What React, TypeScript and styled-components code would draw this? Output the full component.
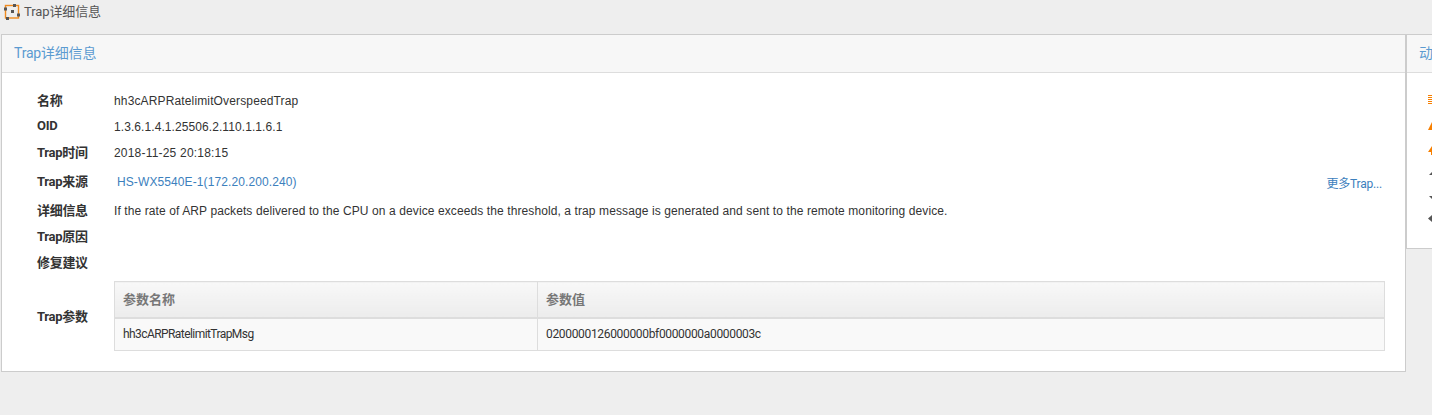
import React from 'react'
import styled, { createGlobalStyle } from 'styled-components'

const GlobalStyle = createGlobalStyle`
  html, body {
    margin: 0;
    padding: 0;
    background: #eeeeee;
  }
  body {
    width: 1432px;
    height: 415px;
    overflow: hidden;
    font-family: "Liberation Sans", "Noto Sans CJK SC", sans-serif;
    font-size: 12px;
    color: #333;
  }
`

const Page = styled.div`
  width: 1432px;
  height: 415px;
  overflow: hidden;
`

const TitleBar = styled.div`
  display: flex;
  align-items: center;
  gap: 3px;
  height: 23px;
  padding: 0 0 0 4px;
  margin-bottom: 11px;
  font-family: Roboto, "Noto Sans CJK SC", sans-serif;
  font-size: 13px;
  letter-spacing: -0.1px;
  color: #555;
`

const TitleText = styled.span`
  padding-bottom: 3px;
`

const Columns = styled.div`
  display: flex;
  align-items: flex-start;
`

const MainPanel = styled.section`
  flex: none;
  box-sizing: border-box;
  width: 1405px;
  margin-left: 1px;
  height: 338px;
  background: #fff;
  border: 1px solid #ccc;
`

const SidePanel = styled.aside`
  flex: none;
  box-sizing: border-box;
  width: 40px;
  height: 215px;
  background: #fff;
  border: 1px solid #ccc;
`

const PanelHeader = styled.h3`
  margin: 0;
  box-sizing: border-box;
  height: 38px;
  padding: 0 12px 4px;
  display: flex;
  align-items: center;
  white-space: nowrap;
  background: #f7f7f7;
  border-bottom: 1px solid #ddd;
  font-family: Roboto, "Noto Sans CJK SC", sans-serif;
  font-size: 14px;
  font-weight: 400;
  letter-spacing: -0.2px;
  color: #5b9bd1;
`

const Body = styled.div`
  padding: 15px 20px 0 35px;
`

const Row = styled.div<{ $height?: number }>`
  display: flex;
  align-items: center;
  height: ${p => p.$height ?? 26}px;
`

const Label = styled.div`
  flex: none;
  width: 77px;
  padding-bottom: 4px;
  font-family: Roboto, "Noto Sans CJK SC", sans-serif;
  font-size: 13px;
  font-weight: 700;
  letter-spacing: -0.3px;
  color: #333;
`

const ParamLabel = styled(Label)`
  padding-bottom: 2px;
`

const Value = styled.div<{ $spacing?: number }>`
  flex: 1;
  font-size: 12px;
  letter-spacing: ${p => p.$spacing ?? 0.1}px;
  color: #333;
`

const Link = styled.a`
  color: #3c80bd;
  font-size: 12px;
  text-decoration: none;
`

const SourceLink = styled(Link)`
  flex: 1;
  padding-left: 3px;
  letter-spacing: 0.1px;
`

const MoreLink = styled(Link)`
  margin-right: 3px;
  font-family: Roboto, "Noto Sans CJK SC", sans-serif;
  letter-spacing: -0.2px;
`

const ParamRow = styled(Row)`
  margin-top: 5px;
  height: 70px;
`

const Table = styled.table`
  flex: 1;
  border-collapse: collapse;
  table-layout: fixed;
  font-family: Roboto, "Noto Sans CJK SC", sans-serif;
  font-size: 12px;
`

const HeadCell = styled.th<{ $width?: number }>`
  width: ${p => (p.$width ? `${p.$width}px` : 'auto')};
  height: 36px;
  box-sizing: border-box;
  padding: 0 8px 2px;
  text-align: left;
  font-size: 13px;
  font-weight: 700;
  color: #777;
  background: linear-gradient(#f8f8f8, #ececec);
  border: 1px solid #ddd;
  border-bottom-width: 2px;
`

const Cell = styled.td<{ $spacing: number }>`
  height: 33px;
  box-sizing: border-box;
  padding: 0 8px;
  letter-spacing: ${p => p.$spacing}px;
  color: #333;
  background: #f9f9f9;
  border: 1px solid #ddd;
`

const SideList = styled.div`
  display: flex;
  flex-direction: column;
  align-items: flex-start;
  padding: 13px 0 0 21px;
`

const SideRow = styled.div<{ $height: number }>`
  display: flex;
  align-items: center;
  height: ${p => p.$height}px;
`

const SideIcon = styled.svg`
  display: block;
  width: 14px;
  height: 14px;
  flex: none;
`

function LogoIcon() {
  return (
    <svg width="17" height="17" viewBox="0 0 17 17">
      <rect x="1.5" y="2.5" width="13" height="12.5" fill="none" stroke="#f08a1d" strokeWidth="1.4" />
      <rect x="0" y="4.5" width="3" height="3" fill="#555" />
      <rect x="9" y="1" width="3" height="3" fill="#555" />
      <rect x="7" y="7" width="3" height="3" fill="#555" />
      <rect x="13" y="10.5" width="3" height="3" fill="#555" />
      <rect x="2" y="14" width="3" height="3" fill="#555" />
    </svg>
  )
}

// only the left few pixels of these show, the panel runs off the page
const sideIcons = [
  { color: '#f77f00', height: 26, d: 'M0 3h14v1H0zM0 5h14v1H0zM0 7h14v1H0zM0 9h14v1H0zM0 11h14v1H0z' },
  { color: '#f77f00', height: 28, d: 'M0 11L4 3h6l4 8z' },
  { color: '#f77f00', height: 20, d: 'M0 9L4 3h6l4 6h-4v3H3V9z' },
  { color: '#555', height: 26, d: 'M1 9l4-4h4l4 4z' },
  { color: '#555', height: 24, d: 'M1 5h12l-6 6z' },
  { color: '#555', height: 18, d: 'M0 6.5L4 3h10v7H4z' },
]

export default function App() {
  return (
    <Page>
      <GlobalStyle />
      <TitleBar>
        <LogoIcon />
        <TitleText>Trap详细信息</TitleText>
      </TitleBar>
      <Columns>
        <MainPanel>
          <PanelHeader>Trap详细信息</PanelHeader>
          <Body>
            <Row>
              <Label>名称</Label>
              <Value $spacing={0.14}>hh3cARPRatelimitOverspeedTrap</Value>
            </Row>
            <Row>
              <Label>OID</Label>
              <Value $spacing={0.08}>1.3.6.1.4.1.25506.2.110.1.1.6.1</Value>
            </Row>
            <Row>
              <Label>Trap时间</Label>
              <Value $spacing={0.2}>2018-11-25 20:18:15</Value>
            </Row>
            <Row $height={32}>
              <Label>Trap来源</Label>
              <SourceLink href="#">HS-WX5540E-1(172.20.200.240)</SourceLink>
              <MoreLink href="#">更多Trap...</MoreLink>
            </Row>
            <Row>
              <Label>详细信息</Label>
              <Value>
                If the rate of ARP packets delivered to the CPU on a device exceeds the threshold, a trap message is generated and sent to the remote monitoring device.
              </Value>
            </Row>
            <Row>
              <Label>Trap原因</Label>
            </Row>
            <Row>
              <Label>修复建议</Label>
            </Row>
            <ParamRow>
              <ParamLabel>Trap参数</ParamLabel>
              <Table>
                <thead>
                  <tr>
                    <HeadCell $width={423}>参数名称</HeadCell>
                    <HeadCell>参数值</HeadCell>
                  </tr>
                </thead>
                <tbody>
                  <tr>
                    <Cell $spacing={-0.57}>hh3cARPRatelimitTrapMsg</Cell>
                    <Cell $spacing={-0.33}>0200000126000000bf0000000a0000003c</Cell>
                  </tr>
                </tbody>
              </Table>
            </ParamRow>
          </Body>
        </MainPanel>
        <SidePanel>
          <PanelHeader>动态</PanelHeader>
          <SideList>
            {sideIcons.map(icon => (
              <SideRow key={icon.d} $height={icon.height}>
                <SideIcon viewBox="0 0 14 14">
                  <path d={icon.d} fill={icon.color} />
                </SideIcon>
              </SideRow>
            ))}
          </SideList>
        </SidePanel>
      </Columns>
    </Page>
  )
}
